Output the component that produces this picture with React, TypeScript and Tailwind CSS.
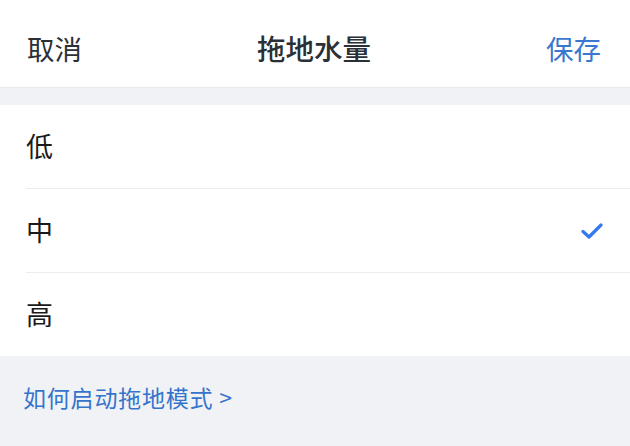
import React from "react";

const font = { fontFamily: '"Noto Sans CJK SC", "Noto Sans", sans-serif' };

function Check() {
  return (
    <svg width="22" height="17" viewBox="0 0 22 17" fill="none">
      <path d="M2 9.5 L8 15 L20 3" stroke="#3478f0" strokeWidth="3.2" strokeLinecap="round" strokeLinejoin="round" />
    </svg>
  );
}

export default function App() {
  const rows = [
    { label: "低", checked: false },
    { label: "中", checked: true },
    { label: "高", checked: false },
  ];
  return (
    <div className="w-[630px] h-[446px] bg-[#f1f2f5] flex flex-col overflow-hidden" style={font}>
      <div className="h-[88px] bg-white border-b border-[#e8e9ec] flex items-center justify-between pt-[10px] pl-[27px] pr-[29px]">
        <span className="text-[27.5px] text-[#2b2f36] w-[90px]">取消</span>
        <span className="text-[28.5px] font-medium text-[#2b2f36]">拖地水量</span>
        <span className="text-[27.5px] text-[#3a78d0] w-[90px] text-right">保存</span>
      </div>
      <div className="h-[17px]" />
      <div className="bg-white flex flex-col">
        {rows.map((r, i) => (
          <div key={r.label} className="pl-[26px]">
            <div
              className={`${i === rows.length - 1 ? "h-[83px]" : "h-[84px]"} flex items-center justify-between pr-[27px] ${i < rows.length - 1 ? "border-b border-[#ebecef]" : ""}`}
            >
              <span className="text-[27px] text-[#1a1a1a]">{r.label}</span>
              {r.checked && <Check />}
            </div>
          </div>
        ))}
      </div>
      <div className="pl-[23px] pt-[24px]">
        <span className="text-[23px] text-[#3574cc] tracking-[0.8px]">如何启动拖地模式 &gt;</span>
      </div>
    </div>
  );
}
